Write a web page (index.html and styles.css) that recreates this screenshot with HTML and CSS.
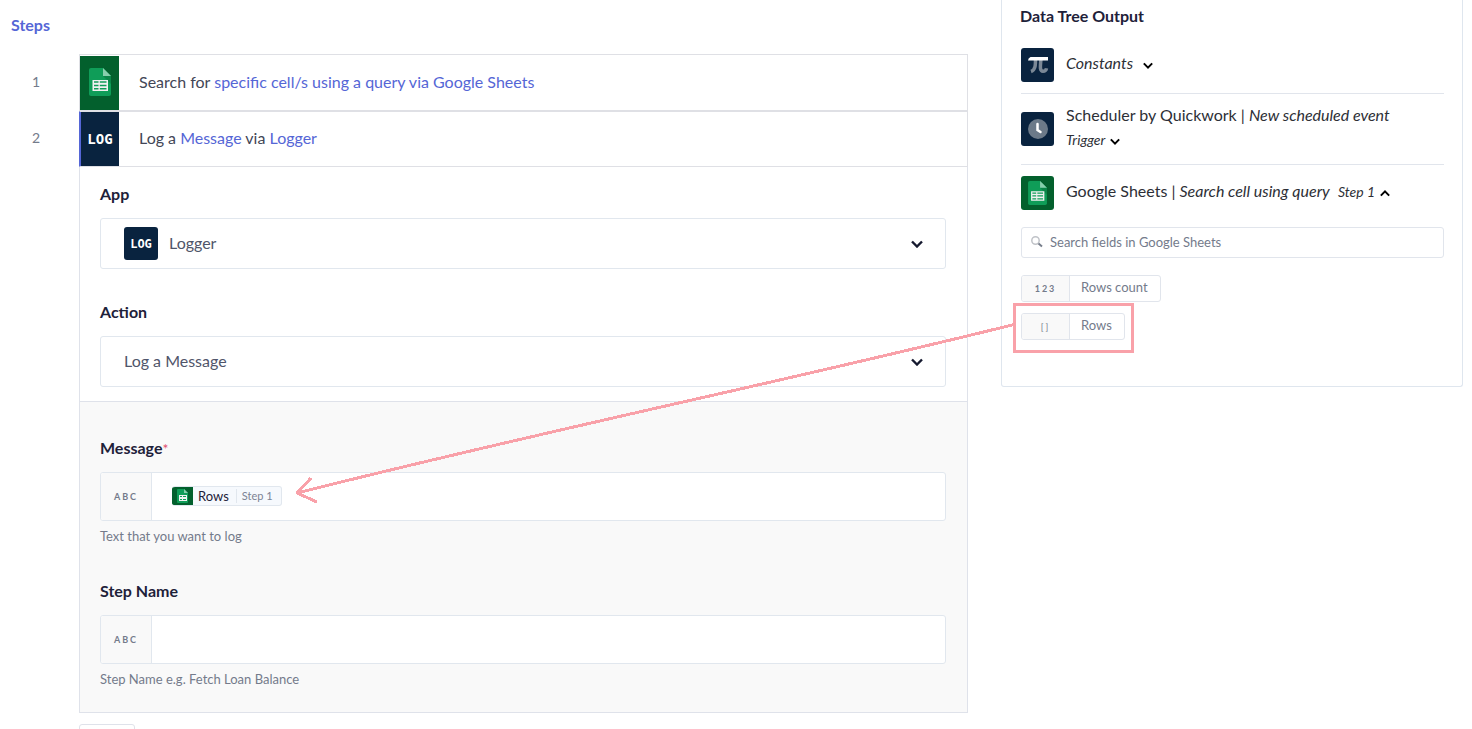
FILE: index.html
```html
<!DOCTYPE html>
<html lang="en">
<head>
<meta charset="utf-8">
<title>Steps</title>
<link rel="stylesheet" href="styles.css">
</head>
<body>
<svg class="defs" aria-hidden="true">
  <symbol id="sheets" viewBox="0 0 22 28">
    <path fill="#0f9d58" d="M2 0h12l8 8v18a2 2 0 0 1-2 2H2a2 2 0 0 1-2-2V2a2 2 0 0 1 2-2z"/>
    <path fill="#0b8548" d="M14 8h8v8z"/>
    <path fill="#87ceac" d="M14 0l8 8h-8z"/>
    <path fill="#f1f1f1" fill-rule="evenodd" d="M3.500 12h15.500v11H3.500zM5 13.300v1.500h4.500v-1.500zM10.800 13.300v1.500h6.700v-1.500zM5 16.700v1.500h4.500v-1.500zM10.800 16.700v1.500h6.700v-1.500zM5 20.100v1.500h4.500v-1.500zM10.800 20.100v1.500h6.700v-1.500z"/>
  </symbol>
  <symbol id="sheets-small" viewBox="0 0 11 14">
    <path fill="#0f9d58" d="M1 0h6l4 4v9a1 1 0 0 1-1 1H1a1 1 0 0 1-1-1V1a1 1 0 0 1 1-1z"/>
    <path fill="#87ceac" d="M7 0l4 4H7z"/>
    <path fill="#f1f1f1" fill-rule="evenodd" d="M2 6h8v6H2zM3 7v1h2V7zM6 7v1h3V7zM3 10v1h2v-1zM6 10v1h3v-1z"/>
  </symbol>
  <symbol id="chevron" viewBox="0 0 12 8">
    <path d="M1 1.500l5 5 5-5" fill="none" stroke="currentColor" stroke-width="2.400"/>
  </symbol>
</svg>
<main class="page">
  <section class="steps">
    <h1 class="steps-title">Steps</h1>
    <ol class="step-list">
      <li class="step">
        <span class="number">1</span>
        <div class="step-row first">
          <span class="step-icon green"><svg class="sheet-lg"><use href="#sheets"/></svg></span>
          <p class="step-text">Search for <a href="#">specific cell/s using a query via Google Sheets</a></p>
        </div>
      </li>
      <li class="step">
        <span class="number">2</span>
        <div class="step-row active">
          <span class="step-icon navy">LOG</span>
          <p class="step-text">Log a <a href="#">Message</a> via <a href="#">Logger</a></p>
        </div>
      </li>
    </ol>
    <form class="panel">
      <div class="config">
        <div class="group">
          <label class="label" for="app">App</label>
          <div class="select-wrap">
            <span class="select-icon">LOG</span>
            <select class="select with-icon" id="app"><option>Logger</option></select>
            <svg class="select-arrow"><use href="#chevron"/></svg>
          </div>
        </div>
        <div class="group">
          <label class="label" for="action">Action</label>
          <div class="select-wrap">
            <select class="select" id="action"><option>Log a Message</option></select>
            <svg class="select-arrow"><use href="#chevron"/></svg>
          </div>
        </div>
      </div>
      <div class="inputs">
        <div class="group">
          <label class="label" for="message">Message<span class="required">*</span></label>
          <div class="field">
            <span class="type">ABC</span>
            <div class="field-body">
              <span class="pill">
                <span class="pill-icon"><svg class="sheet-sm"><use href="#sheets-small"/></svg></span>
                <span class="pill-name">Rows</span>
                <span class="pill-step">Step 1</span>
              </span>
              <input class="text" id="message" type="text">
            </div>
          </div>
          <p class="help">Text that you want to log</p>
        </div>
        <div class="group">
          <label class="label" for="step-name">Step Name</label>
          <div class="field">
            <span class="type">ABC</span>
            <div class="field-body"><input class="text" id="step-name" type="text"></div>
          </div>
          <p class="help">Step Name e.g. Fetch Loan Balance</p>
        </div>
      </div>
    </form>
    <button class="add" type="button" aria-label="Add step"></button>
  </section>

  <aside class="tree">
    <h2 class="tree-title">Data Tree Output</h2>
    <div class="source">
      <span class="tile"><svg width="22" height="18" viewBox="0 0 22 18"><path fill="none" stroke="#7b8896" stroke-width="3.500" d="M8.500 3c0 6 0 11-4.500 12.500M14 3c-1 9-1 12 2 12.200q3 0 3.500-3"/><path fill="#fff" d="M3.500 1H21v3.500H1q0-2.500 2.500-3.500z"/></svg></span>
      <button class="source-name" type="button"><em>Constants</em><svg class="caret gap"><use href="#chevron"/></svg></button>
    </div>
    <div class="source tall">
      <span class="tile"><svg width="20" height="20" viewBox="0 0 20 20"><circle cx="10" cy="10" r="10" fill="#6c7a89"/><path fill="none" stroke="#fff" stroke-width="2.500" stroke-linecap="round" d="M9.500 5v6l3 2"/></svg></span>
      <button class="source-name" type="button">Scheduler by Quickwork | <em>New scheduled event</em><br><em class="small">Trigger</em><svg class="caret"><use href="#chevron"/></svg></button>
    </div>
    <div class="source last">
      <span class="tile green"><svg class="sheet-md"><use href="#sheets"/></svg></span>
      <button class="source-name" type="button">Google Sheets | <em>Search cell using query</em> <em class="small step-tag">Step 1</em><svg class="caret up"><use href="#chevron"/></svg></button>
    </div>
    <label class="search">
      <svg width="12" height="12" viewBox="0 0 12 12"><circle cx="4.500" cy="4.500" r="3.700" fill="none" stroke="#c0c3c8" stroke-width="1.500"/><path d="M7.500 7.500l3.500 3" stroke="#777e8b" stroke-width="2"/></svg>
      <input class="search-input" type="search" placeholder="Search fields in Google Sheets" aria-label="Search fields in Google Sheets">
    </label>
    <div class="chips">
      <button class="chip" type="button"><span class="chip-type">123</span><span class="chip-name">Rows count</span></button>
      <div class="marked">
        <button class="chip" type="button"><span class="chip-type light">[]</span><span class="chip-name">Rows</span></button>
        <svg class="arrow" width="844" height="206" viewBox="0 0 844 206"><path class="arrow-line" d="M724 24C500 80 250 131 5 193M19 178L5 193l20 9"/><rect class="arrow-box" x="722" y="4" width="118" height="47"/></svg>
      </div>
    </div>
  </aside>
</main>
</body>
</html>
```
FILE: styles.css
```css
* { box-sizing: border-box; }
body {
  margin: 0;
  background: #fff;
  color: #1e2139;
  font-family: Lato, "Liberation Sans", sans-serif;
  font-size: 16px;
  line-height: 20px;
}
button, input, select { font: inherit; color: inherit; }
h1, h2, p, ol { margin: 0; padding: 0; }
a { color: #5566d6; text-decoration: none; }
.defs { position: absolute; width: 0; height: 0; }

.page {
  display: grid;
  grid-template-columns: minmax(0, 1fr) 462px;
  align-items: start;
  gap: 33px;
  height: 100vh;
  padding: 0 9px 0 11px;
  overflow: hidden;
}

/* Step list */
.steps-title { padding: 15px 0 19px; color: #5566d6; font-size: 16px; line-height: 20px; }
.step-list { list-style: none; }
.step { display: grid; grid-template-columns: 29px minmax(0, 1fr); column-gap: 39px; align-items: center; }
.number { padding-bottom: 2px; color: #747b8b; font-size: 14px; text-align: right; }
.step-row {
  display: flex;
  align-items: center;
  gap: 20px;
  height: 56px;
  border: 1px solid #dfe0e5;
  color: #424656;
}
.step-row.first { height: 57px; padding-top: 1px; }
.step-row.active { border-left-color: #5566d6; box-shadow: inset 1px 0 #5566d6; }
.step-row.active .step-icon { margin-left: 1px; width: 38px; }
.step-text { padding-bottom: 3px; }
.step-icon { display: grid; place-items: center; width: 39px; height: 54px; }
.green { background: #03602d; }
.navy { background: #09233f; }
.step-icon.navy, .select-icon {
  color: #fff;
  font-family: "DejaVu Sans Mono", monospace;
  font-weight: bold;
  font-size: 14px;
}
.sheet-lg { width: 22px; height: 28px; }
.step-icon .sheet-lg { margin-bottom: 2px; }
.sheet-md { width: 19px; height: 24px; }
.sheet-sm { width: 11px; height: 14px; }

/* Step configuration */
.panel { margin-left: 68px; border: 1px solid #dfe2ea; border-top: 0; }
.config, .inputs { display: flex; flex-direction: column; padding: 0 21px 0 20px; }
.config { gap: 33px; padding-top: 17px; padding-bottom: 14px; }
.inputs { gap: 36px; padding-top: 36px; padding-bottom: 24px; background: #f9f9f9; border-top: 1px solid #dfe2ea; }
.label { display: block; margin-bottom: 14px; font-weight: bold; }
.required { color: #e0506e; font-size: 14px; font-weight: normal; line-height: 16px; }
.select-wrap { position: relative; }
.select {
  display: block;
  width: 100%;
  height: 51px;
  padding: 0 60px 2px 23px;
  appearance: none;
  border: 1px solid #e1e7ee;
  border-radius: 3px;
  background: #fff;
  color: #50556a;
}
.select.with-icon { padding-left: 68px; }
.select-icon {
  position: absolute;
  top: 9px;
  left: 24px;
  display: grid;
  place-items: center;
  width: 34px;
  height: 33px;
  border-radius: 3px;
  background: #09233f;
}
.select-wrap .select-icon { font-size: 12px; }
.select-arrow { position: absolute; top: 22px; right: 23px; width: 12px; height: 8px; color: #15192f; pointer-events: none; }
.field { display: flex; height: 49px; border: 1px solid #e1e7ee; border-radius: 3px; background: #fff; overflow: hidden; }
.type {
  display: grid;
  place-items: center;
  width: 51px;
  background: #f9f9f9;
  border-right: 1px solid #e1e7ee;
  color: #747b8b;
  font-size: 9px;
  font-weight: bold;
  letter-spacing: 2px;
}
.field-body { display: flex; flex: 1; align-items: center; padding-left: 20px; }
.text { flex: 1; min-width: 0; height: 46px; margin-bottom: 1px; border: 0; background: none; }
.pill { display: flex; align-items: center; height: 20px; margin-bottom: 1px; border: 1px solid #e1e7ee; border-left: 0; border-radius: 3px; background: #f6f9fd; overflow: hidden; }
.pill-icon { display: grid; place-items: center; width: 21px; height: 20px; background: #03602d; }
.pill-name { padding: 0 7px 1px 5px; font-size: 13px; }
.pill-step { padding: 0 8px 0 5px; border-left: 1px solid #e1e7ee; color: #7c8394; font-size: 11px; line-height: 14px; }
.help { margin-top: 6px; color: #747b8b; font-size: 13px; line-height: 18px; }
.add { display: block; width: 56px; height: 40px; margin: 11px 0 0 68px; border: 1px solid #dfe2ea; border-radius: 3px; background: #fff; }

/* Data tree */
.tree { padding: 6px 18px 46px 19px; border: 1px solid #dfe6ee; border-top: 0; border-radius: 0 0 3px 3px; }
.tree-title { margin-left: -1px; font-size: 16px; line-height: 20px; }
.source { display: flex; align-items: center; gap: 12px; height: 68px; padding-top: 10px; border-bottom: 1px solid #e1e5ec; }
.source.tall { height: 71px; padding: 0; }
.source.last { height: 57px; padding: 0 0 1px; border: 0; }
.tile { display: grid; place-items: center; flex: none; width: 33px; height: 34px; border-radius: 3px; background: #09233f; }
.tile.green { background: #03602d; }
.source-name { padding: 0 0 3px; border: 0; background: none; color: #2d2f36; line-height: 24px; text-align: left; white-space: nowrap; }
.small { font-size: 14px; }
.step-tag { margin-left: 4px; }
.caret { width: 10px; height: 7px; margin-left: 5px; color: #000; }
.caret.gap { margin-left: 10px; }
.caret.up { transform: rotate(180deg); }
.search { display: flex; align-items: center; gap: 7px; height: 31px; margin-top: 5px; padding: 0 9px 2px; border: 1px solid #e1e5ec; border-radius: 3px; }
.search-input { flex: 1; min-width: 0; padding: 0; border: 0; background: none; font-size: 13px; outline: 0; }
.search-input::placeholder { color: #747b8b; opacity: 1; }
.chips { display: flex; flex-direction: column; align-items: flex-start; gap: 11px; margin-top: 17px; }
.chip { display: flex; height: 27px; padding: 0; border: 1px solid #e1e5ec; border-radius: 3px; background: #fff; color: #747b8b; overflow: hidden; }
.chip-type { display: grid; place-items: center; width: 48px; height: 25px; background: #f9f9f9; border-right: 1px solid #e1e5ec; font-size: 9px; font-weight: bold; letter-spacing: 2px; }
.chip-type.light { font-weight: normal; }
.chip-name { padding: 0 12px 0 11px; font-size: 13px; line-height: 23px; }

/* Annotation drawn over both columns */
.marked { position: relative; }
.arrow { position: absolute; top: -13px; left: -729px; pointer-events: none; }
.arrow-line, .arrow-box { fill: none; stroke: #f9a1a9; stroke-width: 3; shape-rendering: crispEdges; }
.arrow-line { stroke-linejoin: round; }
```
